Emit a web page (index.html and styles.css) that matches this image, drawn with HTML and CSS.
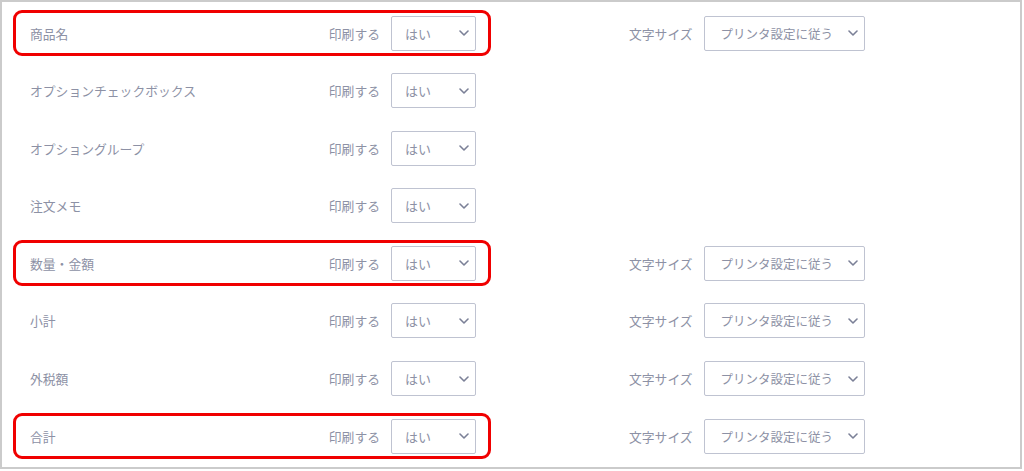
FILE: index.html
```html
<!DOCTYPE html>
<html lang="ja">
<head>
<meta charset="utf-8">
<link rel="stylesheet" href="styles.css">
</head>
<body>
<div class="frame">
  <div class="row">
    <div class="main highlight">
      <span class="name">商品名</span>
      <span class="label">印刷する</span>
      <div class="select yes"><span>はい</span><svg class="chev" viewBox="0 0 10 6"><path d="M1 1l4 4 4-4"/></svg></div>
    </div>
    <div class="size">
      <span class="label">文字サイズ</span>
      <div class="select wide"><span>プリンタ設定に従う</span><svg class="chev" viewBox="0 0 10 6"><path d="M1 1l4 4 4-4"/></svg></div>
    </div>
  </div>
  <div class="row">
    <div class="main">
      <span class="name">オプションチェックボックス</span>
      <span class="label">印刷する</span>
      <div class="select yes"><span>はい</span><svg class="chev" viewBox="0 0 10 6"><path d="M1 1l4 4 4-4"/></svg></div>
    </div>
  </div>
  <div class="row">
    <div class="main">
      <span class="name">オプショングループ</span>
      <span class="label">印刷する</span>
      <div class="select yes"><span>はい</span><svg class="chev" viewBox="0 0 10 6"><path d="M1 1l4 4 4-4"/></svg></div>
    </div>
  </div>
  <div class="row">
    <div class="main">
      <span class="name">注文メモ</span>
      <span class="label">印刷する</span>
      <div class="select yes"><span>はい</span><svg class="chev" viewBox="0 0 10 6"><path d="M1 1l4 4 4-4"/></svg></div>
    </div>
  </div>
  <div class="row">
    <div class="main highlight">
      <span class="name">数量・金額</span>
      <span class="label">印刷する</span>
      <div class="select yes"><span>はい</span><svg class="chev" viewBox="0 0 10 6"><path d="M1 1l4 4 4-4"/></svg></div>
    </div>
    <div class="size">
      <span class="label">文字サイズ</span>
      <div class="select wide"><span>プリンタ設定に従う</span><svg class="chev" viewBox="0 0 10 6"><path d="M1 1l4 4 4-4"/></svg></div>
    </div>
  </div>
  <div class="row">
    <div class="main">
      <span class="name">小計</span>
      <span class="label">印刷する</span>
      <div class="select yes"><span>はい</span><svg class="chev" viewBox="0 0 10 6"><path d="M1 1l4 4 4-4"/></svg></div>
    </div>
    <div class="size">
      <span class="label">文字サイズ</span>
      <div class="select wide"><span>プリンタ設定に従う</span><svg class="chev" viewBox="0 0 10 6"><path d="M1 1l4 4 4-4"/></svg></div>
    </div>
  </div>
  <div class="row">
    <div class="main">
      <span class="name">外税額</span>
      <span class="label">印刷する</span>
      <div class="select yes"><span>はい</span><svg class="chev" viewBox="0 0 10 6"><path d="M1 1l4 4 4-4"/></svg></div>
    </div>
    <div class="size">
      <span class="label">文字サイズ</span>
      <div class="select wide"><span>プリンタ設定に従う</span><svg class="chev" viewBox="0 0 10 6"><path d="M1 1l4 4 4-4"/></svg></div>
    </div>
  </div>
  <div class="row">
    <div class="main highlight">
      <span class="name">合計</span>
      <span class="label">印刷する</span>
      <div class="select yes"><span>はい</span><svg class="chev" viewBox="0 0 10 6"><path d="M1 1l4 4 4-4"/></svg></div>
    </div>
    <div class="size">
      <span class="label">文字サイズ</span>
      <div class="select wide"><span>プリンタ設定に従う</span><svg class="chev" viewBox="0 0 10 6"><path d="M1 1l4 4 4-4"/></svg></div>
    </div>
  </div>
</div>
</body>
</html>
```

FILE: styles.css
```css
* { box-sizing: border-box; }
html, body { margin: 0; padding: 0; background: #ffffff; }
body {
  font-family: "Noto Sans CJK JP", "Noto Sans", sans-serif;
  font-size: 12.8px;
  color: #8d91a5;
}
.frame {
  width: 1022px;
  height: 469px;
  border: 2px solid #cbcbcb;
  padding: 8px 0 0 11px;
  display: flex;
  flex-direction: column;
  gap: 11.6px;
}
.row {
  display: flex;
  align-items: center;
  height: 46px;
  gap: 138px;
}
.main {
  width: 478px;
  height: 46px;
  display: flex;
  align-items: center;
  border: 3px solid transparent;
  border-radius: 9px;
  padding: 0 12px 0 14px;
}
.main.highlight { border-color: #f00000; }
.name { flex: 1; }
.label { margin-right: 11px; white-space: nowrap; }
.size { display: flex; align-items: center; }
.select {
  height: 35px;
  border: 1px solid #bfc3d1;
  border-radius: 2px;
  display: flex;
  align-items: center;
  justify-content: space-between;
  background: #fff;
  color: #8d91a5;
  font-size: 13px;
}
.select.yes { width: 85px; padding: 0 6px 0 13px; }
.select.wide { width: 161px; padding: 0 6px 0 16px; font-size: 12.5px; }
.chev {
  width: 10px;
  height: 6px;
  fill: none;
  stroke: #7b8097;
  stroke-width: 1.6;
  stroke-linecap: round;
  stroke-linejoin: round;
}
```
